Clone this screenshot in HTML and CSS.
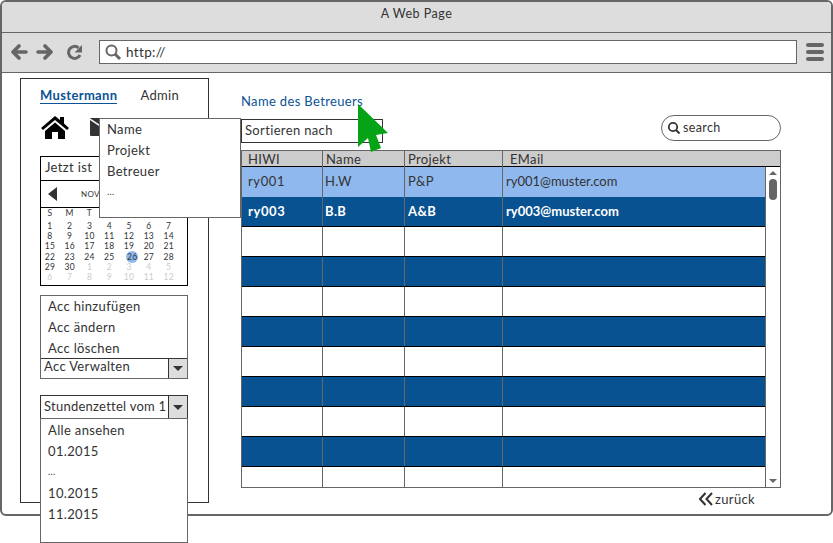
FILE: index.html
```html
<!DOCTYPE html>
<html lang="de">
<head>
  <meta charset="UTF-8">
  <title>A Web Page</title>
  <link rel="stylesheet" href="styles.css">
</head>
<body>
  <div class="window">
    <div class="titlebar">A Web Page</div>
    <div class="toolbar">
      <svg class="back-icon" width="17" height="16" viewBox="0 0 17 16"><path d="M8 2 L2 8 L8 14 M3 8 H15" fill="none" stroke="#666" stroke-width="3.6" stroke-linecap="round" stroke-linejoin="round"/></svg>
      <svg class="fwd-icon" width="17" height="16" viewBox="0 0 17 16"><path d="M9 2 L15 8 L9 14 M14 8 H2" fill="none" stroke="#666" stroke-width="3.6" stroke-linecap="round" stroke-linejoin="round"/></svg>
      <svg class="reload" width="16" height="16" viewBox="0 0 16 16"><path d="M14 11 A6 6 0 1 1 12.5 3.8" fill="none" stroke="#666" stroke-width="3"/><path d="M16 1 V8.5 H8.5 Z" fill="#666"/></svg>
      <div class="address">
        <svg width="18" height="18" viewBox="0 0 18 18"><circle cx="7.5" cy="7.5" r="5" fill="none" stroke="#666" stroke-width="2"/><path d="M11 11 L16 16" stroke="#666" stroke-width="3"/></svg>
        <span>http://</span>
      </div>
      <div class="burger"><i></i><i></i><i></i></div>
    </div>

    <div class="content">
      <aside class="sidebar">
        <div class="user-row">
          <a class="user-link">Mustermann</a>
          <span>Admin</span>
        </div>
        <div class="icon-row">
          <svg width="30" height="24" viewBox="0 0 30 24"><path d="M1 13 L15 1 L20 5 V2 H24 V8.5 L29 13 L27 15 L15 5 L3 15 Z" fill="#000"/><path d="M5 16 L15 7.5 L25 16 V24 H18 V17 H12 V24 H5 Z" fill="#000"/></svg>
          <svg class="mail" width="24" height="18" viewBox="0 0 24 18"><rect width="24" height="18" rx="1" fill="#333"/><path d="M0 1 L12 9 L24 1" fill="none" stroke="#fff" stroke-width="1.5"/></svg>
        </div>

        <div class="calendar">
          <div class="cal-title">Jetzt ist</div>
          <div class="cal-nav">
            <i class="cal-arrow"></i>
            <span>NOV</span>
          </div>
          <div class="cal-grid">
            <b>S</b><b>M</b><b>T</b><b>W</b><b>T</b><b>F</b><b>S</b>
            <span>1</span><span>2</span><span>3</span><span>4</span><span>5</span><span>6</span><span>7</span>
            <span>8</span><span>9</span><span>10</span><span>11</span><span>12</span><span>13</span><span>14</span>
            <span>15</span><span>16</span><span>17</span><span>18</span><span>19</span><span>20</span><span>21</span>
            <span>22</span><span>23</span><span>24</span><span>25</span><span class="today">26</span><span>27</span><span>28</span>
            <span>29</span><span>30</span><span class="off">1</span><span class="off">2</span><span class="off">3</span><span class="off">4</span><span class="off">5</span>
            <span class="off">6</span><span class="off">7</span><span class="off">8</span><span class="off">9</span><span class="off">10</span><span class="off">11</span><span class="off">12</span>
          </div>
        </div>

        <div class="acc-box">
          <ul class="list acc-list">
            <li>Acc hinzufügen</li>
            <li>Acc ändern</li>
            <li>Acc löschen</li>
          </ul>
          <div class="combo acc-combo">
            <span>Acc Verwalten</span>
            <div class="combo-btn"><i></i></div>
          </div>
        </div>

        <div class="combo sheet-combo">
          <span>Stundenzettel vom 1</span>
          <div class="combo-btn"><i></i></div>
        </div>
        <ul class="list sheet-list">
          <li>Alle ansehen</li>
          <li>01.2015</li>
          <li class="dots">...</li>
          <li>10.2015</li>
          <li>11.2015</li>
        </ul>
      </aside>

      <main class="main">
        <a class="crumb">Name des Betreuers</a>
        <div class="filter-row">
          <div class="sort-box">Sortieren nach</div>
          <div class="search">
            <svg width="14" height="14" viewBox="0 0 14 14"><circle cx="6" cy="6" r="4.2" fill="none" stroke="#333" stroke-width="1.8"/><path d="M9 9 L12.5 12.5" stroke="#333" stroke-width="2"/></svg>
            <span>search</span>
          </div>
        </div>

        <div class="grid-wrap">
          <div class="grid-head">
            <div>HIWI</div><div>Name</div><div>Projekt</div><div class="mail-col">EMail</div>
          </div>
          <div class="grid-body">
            <div class="rows">
              <div class="row selected"><div>ry001</div><div>H.W</div><div>P&amp;P</div><div>ry001@muster.com</div></div>
              <div class="row dark"><div>ry003</div><div>B.B</div><div>A&amp;B</div><div>ry003@muster.com</div></div>
              <div class="row"><div></div><div></div><div></div><div></div></div>
              <div class="row band"><div></div><div></div><div></div><div></div></div>
              <div class="row"><div></div><div></div><div></div><div></div></div>
              <div class="row band"><div></div><div></div><div></div><div></div></div>
              <div class="row"><div></div><div></div><div></div><div></div></div>
              <div class="row band"><div></div><div></div><div></div><div></div></div>
              <div class="row"><div></div><div></div><div></div><div></div></div>
              <div class="row band"><div></div><div></div><div></div><div></div></div>
              <div class="row"><div></div><div></div><div></div><div></div></div>
            </div>
            <div class="scrollbar">
              <i class="up"></i>
              <div class="thumb"></div>
              <i class="down"></i>
            </div>
          </div>
        </div>

        <a class="back">
          <svg width="15" height="14" viewBox="0 0 15 14"><path d="M6.5 1 L1 7 L6.5 13 M13 1 L7.5 7 L13 13" fill="none" stroke="#333" stroke-width="2"/></svg>
          <span>zurück</span>
        </a>
      </main>

      <ul class="list popup">
        <li>Name</li>
        <li>Projekt</li>
        <li>Betreuer</li>
        <li class="dots">...</li>
      </ul>

      <svg class="cursor" width="31" height="48" viewBox="0 0 31 48"><path d="M0 0 L30 29 L18 31 L23 44 L13 48 L10 34 L0 43 Z" fill="#06a317"/></svg>
    </div>
  </div>
</body>
</html>
```

FILE: styles.css
```css
* {
  box-sizing: border-box;
}
html, body {
  margin: 0;
  height: 543px;
  overflow: hidden;
  background: #fff;
}
body {
  font-family: Lato, "Noto Sans", sans-serif;
  font-size: 13px;
  letter-spacing: 0.35px;
  color: #333;
}
ul {
  list-style: none;
  margin: 0;
  padding: 0;
}
.window {
  height: 516px;
  border: 2px solid #666;
  border-radius: 6px;
}
.titlebar {
  height: 31px;
  background: #ddd;
  border-bottom: 1px solid #666;
  border-radius: 4px 4px 0 0;
  text-align: center;
  font-size: 12.5px;
  letter-spacing: 0.5px;
  line-height: 24px;
}
.toolbar {
  height: 40px;
  background: #ddd;
  border-bottom: 1px solid #666;
  display: flex;
  align-items: center;
  padding: 0 0 1px 9px;
}
.back-icon {
  margin-right: 8px;
}
.fwd-icon {
  margin-right: 13px;
}
.address {
  margin-left: 17px;
  width: 698px;
  height: 24px;
  background: #fff;
  border: 1px solid #666;
  display: flex;
  align-items: center;
  gap: 4px;
  padding-left: 4px;
  font-size: 13.5px;
}
.burger {
  margin-left: 9px;
  width: 18px;
  display: flex;
  flex-direction: column;
  gap: 3px;
}
.burger i {
  height: 4px;
  background: #666;
  border-radius: 2px;
}

.content {
  position: relative;
  display: flex;
  padding: 5px 0 0 18px;
}
.sidebar {
  width: 189px;
  height: 425px;
  border: 1px solid #333;
  padding: 0 0 0 19px;
  flex-shrink: 0;
}
.user-row {
  display: flex;
  gap: 23px;
  height: 36px;
  padding-top: 8px;
  line-height: 17px;
}
.user-link {
  color: #0b5394;
  font-weight: 700;
  border-bottom: 1px solid #0b5394;
  height: 17px;
}
.icon-row {
  display: flex;
  align-items: flex-start;
  gap: 20px;
  height: 41px;
}
.mail {
  margin-top: 3px;
}

.calendar {
  width: 148px;
  height: 130px;
  border: 1px solid #000;
  background: #fff;
}
.cal-title {
  height: 24px;
  border-bottom: 1px solid #000;
  padding-left: 4px;
  line-height: 21px;
}
.cal-nav {
  height: 27px;
  border-bottom: 1px solid #000;
  display: flex;
  align-items: center;
  padding-left: 7px;
  font-size: 8px;
}
.cal-arrow {
  border-style: solid;
  border-width: 7px 9px 7px 0;
  border-color: transparent #333 transparent transparent;
  margin-right: 24px;
}
.cal-grid {
  display: grid;
  grid-template-columns: repeat(7, 19.8px);
  grid-template-rows: 13px repeat(6, 10.2px);
  margin-left: -1px;
  font-size: 8.5px;
  letter-spacing: 0.3px;
  line-height: 10px;
  text-align: center;
}
.cal-grid b {
  font-weight: 400;
}
.cal-grid .off {
  color: #ccc;
}
.cal-grid .today {
  background: #8fb8ee;
  border-radius: 50%;
  width: 12px;
  height: 12px;
  margin: -1px 0 0 7px;
  line-height: 12px;
}

.acc-box {
  width: 148px;
  height: 84px;
  margin-top: 9px;
  border: 1px solid #666;
  display: flex;
  flex-direction: column;
}
.list li {
  height: 21px;
  line-height: 20px;
  padding-left: 7px;
  white-space: nowrap;
}
.list .dots {
  font-size: 9px;
}
.acc-list {
  height: 62px;
}
.combo {
  display: flex;
  justify-content: space-between;
  white-space: nowrap;
  background: #fff;
}
.acc-combo {
  height: 21px;
  border-top: 1px solid #333;
  padding-left: 3px;
  line-height: 14px;
}
.combo-btn {
  width: 19px;
  background: #ddd;
  border-left: 1px solid #333;
  display: flex;
  align-items: center;
  justify-content: center;
  flex-shrink: 0;
}
.combo-btn i {
  border-style: solid;
  border-width: 5px 5.5px 0;
  border-color: #333 transparent transparent;
}
.sheet-combo {
  width: 148px;
  height: 24px;
  margin-top: 16px;
  border: 1px solid #333;
  padding-left: 3px;
  line-height: 21px;
  letter-spacing: 0.25px;
}
.sheet-list {
  position: relative;
  width: 148px;
  height: 125px;
  margin-top: -1px;
  background: #fff;
  border: 1px solid #666;
  padding-top: 1px;
}

.main {
  width: 540px;
  margin-left: 32px;
}
.crumb {
  display: block;
  height: 41px;
  padding-top: 15px;
  color: #0b5394;
  line-height: 17px;
}
.filter-row {
  display: flex;
  justify-content: space-between;
  align-items: flex-start;
  height: 35px;
  margin-top: -4px;
}
.sort-box {
  width: 142px;
  height: 24px;
  margin-top: 4px;
  border: 1px solid #333;
  padding-left: 3px;
  line-height: 21px;
}
.search {
  width: 120px;
  height: 26px;
  border: 1px solid #666;
  border-radius: 13px;
  display: flex;
  align-items: center;
  gap: 2px;
  padding: 0 0 1px 5px;
  font-size: 12.5px;
}

.grid-wrap {
  height: 338px;
  border: 1px solid #666;
}
.grid-head {
  display: grid;
  grid-template-columns: 81px 82px 98px 1fr;
  height: 16px;
  background: #ccc;
  border-bottom: 1px solid #000;
  line-height: 17px;
}
.grid-head div {
  padding-left: 6px;
  border-right: 1px solid #666;
}
.grid-head div:nth-child(n+2) {
  padding-left: 3px;
}
.grid-head div:last-child {
  border-right: 0;
}
.grid-head div.mail-col {
  padding-left: 7px;
}
.grid-body {
  display: flex;
  height: 320px;
}
.rows {
  flex: 1;
  overflow: hidden;
}
.row {
  display: grid;
  grid-template-columns: 81px 82px 98px 1fr;
  height: 30px;
  border-bottom: 1px solid #000;
  line-height: 29px;
}
.row div {
  padding-left: 3px;
  border-right: 1px solid #666;
}
.row div:first-child {
  padding-left: 6px;
  letter-spacing: 0.6px;
}
.row div:nth-child(2) {
  padding-left: 2px;
}
.row div:last-child {
  border-right: 0;
  letter-spacing: 0;
}
.row.selected {
  background: #8fb8ee;
  border-bottom: 0;
}
.row.dark, .row.band {
  background: #085292;
}
.row.dark {
  color: #fff;
  font-weight: 700;
}
.scrollbar {
  width: 15px;
  border-left: 1px solid #666;
  display: flex;
  flex-direction: column;
  align-items: center;
  padding-top: 4px;
}
.scrollbar .up {
  border-style: solid;
  border-width: 0 4px 4px;
  border-color: transparent transparent #666;
}
.thumb {
  width: 8px;
  height: 21px;
  margin-top: 4px;
  background: #666;
  border-radius: 4px;
}
.scrollbar .down {
  margin-top: auto;
  margin-bottom: 4px;
  border-style: solid;
  border-width: 4px 4px 0;
  border-color: #666 transparent transparent;
}
.back {
  display: flex;
  align-items: center;
  gap: 1px;
  justify-content: flex-end;
  padding-right: 26px;
  height: 22px;
}

.popup {
  position: absolute;
  left: 97px;
  top: 45px;
  width: 142px;
  height: 100px;
  background: #fff;
  border: 1px solid #666;
}
.cursor {
  position: absolute;
  left: 356px;
  top: 31px;
}
```
